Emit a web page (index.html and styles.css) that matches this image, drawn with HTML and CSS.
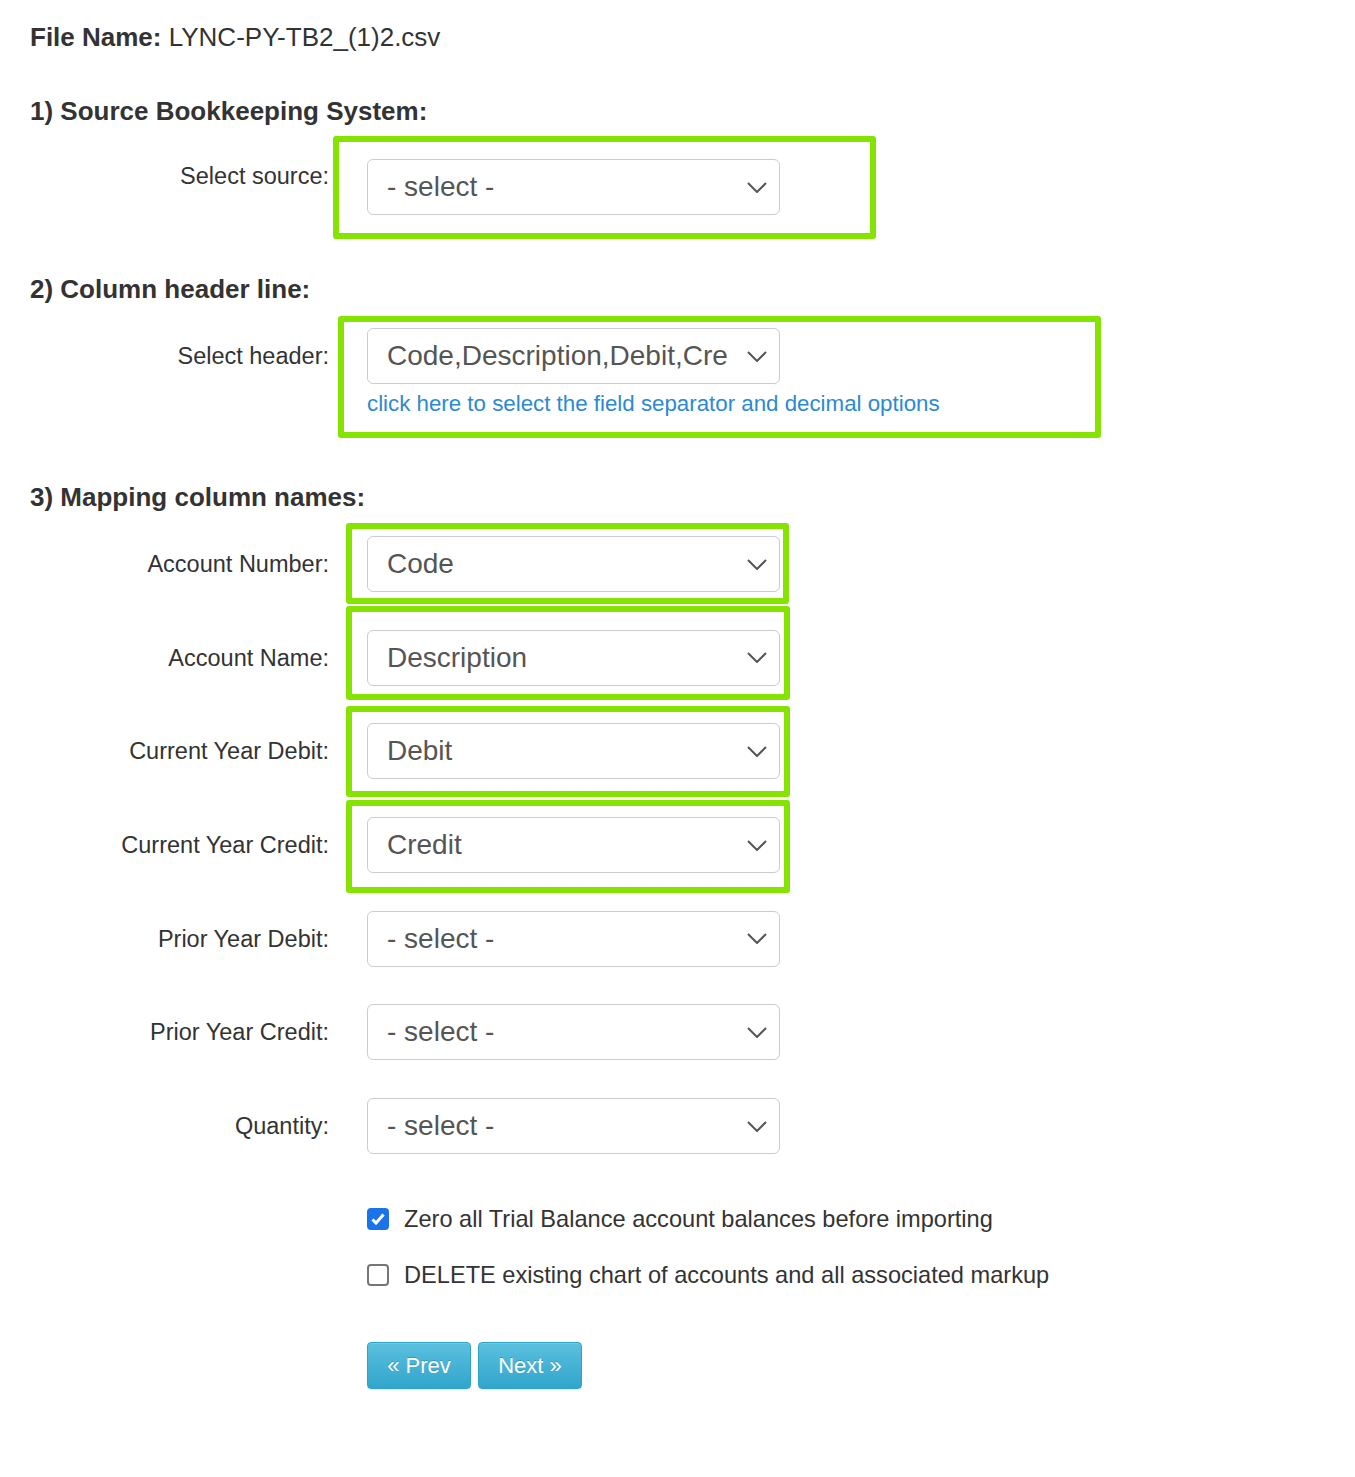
FILE: index.html
```html
<!DOCTYPE html>
<html lang="en">
<head>
  <meta charset="UTF-8" />
  <title>Import Trial Balance</title>
  <link rel="stylesheet" href="styles.css">
</head>
<body>
  <div id="wizard">
    <div class="file-name"><b>File Name:</b> LYNC-PY-TB2_(1)2.csv</div>

    <h2 class="step step-1">1) Source Bookkeeping System:</h2>
    <div class="row row-source">
      <label class="label label-top">Select source:</label>
      <div class="select"><span>- select -</span><svg class="chev" viewBox="0 0 20 11"><path d="M1 1l9 9 9-9"/></svg></div>
    </div>

    <h2 class="step step-2">2) Column header line:</h2>
    <div class="row row-header">
      <label class="label">Select header:</label>
      <div class="field">
        <div class="select"><span class="clip">Code,Description,Debit,Cre</span><svg class="chev" viewBox="0 0 20 11"><path d="M1 1l9 9 9-9"/></svg></div>
        <a href="#" class="options-link">click here to select the field separator and decimal options</a>
      </div>
    </div>

    <h2 class="step step-3">3) Mapping column names:</h2>
    <div class="mapping">
      <div class="row">
        <label class="label">Account Number:</label>
        <div class="select"><span>Code</span><svg class="chev" viewBox="0 0 20 11"><path d="M1 1l9 9 9-9"/></svg></div>
      </div>
      <div class="row">
        <label class="label">Account Name:</label>
        <div class="select"><span>Description</span><svg class="chev" viewBox="0 0 20 11"><path d="M1 1l9 9 9-9"/></svg></div>
      </div>
      <div class="row">
        <label class="label">Current Year Debit:</label>
        <div class="select"><span>Debit</span><svg class="chev" viewBox="0 0 20 11"><path d="M1 1l9 9 9-9"/></svg></div>
      </div>
      <div class="row">
        <label class="label">Current Year Credit:</label>
        <div class="select"><span>Credit</span><svg class="chev" viewBox="0 0 20 11"><path d="M1 1l9 9 9-9"/></svg></div>
      </div>
      <div class="row">
        <label class="label">Prior Year Debit:</label>
        <div class="select"><span>- select -</span><svg class="chev" viewBox="0 0 20 11"><path d="M1 1l9 9 9-9"/></svg></div>
      </div>
      <div class="row">
        <label class="label">Prior Year Credit:</label>
        <div class="select"><span>- select -</span><svg class="chev" viewBox="0 0 20 11"><path d="M1 1l9 9 9-9"/></svg></div>
      </div>
      <div class="row">
        <label class="label">Quantity:</label>
        <div class="select"><span>- select -</span><svg class="chev" viewBox="0 0 20 11"><path d="M1 1l9 9 9-9"/></svg></div>
      </div>
    </div>

    <div class="options">
      <label class="check">
        <span class="box checked"><svg viewBox="0 0 18 18"><path d="M3.5 9.5l3.5 3.5 7.5-8.5"/></svg></span>
        Zero all Trial Balance account balances before importing
      </label>
      <label class="check">
        <span class="box"></span>
        DELETE existing chart of accounts and all associated markup
      </label>
    </div>

    <div class="buttons">
      <button class="btn">&laquo; Prev</button>
      <button class="btn">Next &raquo;</button>
    </div>

    <!-- highlight annotations -->
    <div class="mark mark-source"></div>
    <div class="mark mark-header"></div>
    <div class="mark mark-code"></div>
    <div class="mark mark-desc"></div>
    <div class="mark mark-debit"></div>
    <div class="mark mark-credit"></div>
  </div>
</body>
</html>
```

FILE: styles.css
```css
body {
  margin: 0;
  background: #fff;
  color: #333;
  font-family: "Liberation Sans", Arial, sans-serif;
}
#wizard {
  position: relative;
  padding: 22px 30px 80px;
  min-height: 1300px;
}
.file-name {
  font-size: 26px;
  line-height: 30px;
}
.step {
  font-size: 26px;
  font-weight: bold;
  line-height: 28px;
  margin: 0;
}
.step-1 {
  margin-top: 45px;
}
.step-2 {
  margin-top: 60px;
}
.step-3 {
  margin-top: 66px;
}
.row {
  display: flex;
  align-items: flex-start;
  gap: 38px;
}
.label {
  width: 299px;
  flex: none;
  text-align: right;
  font-size: 23.5px;
  line-height: 28px;
  padding-top: 14px;
}
.label-top {
  padding-top: 3px;
}
.row-source {
  margin-top: 34px;
}
.row-header {
  margin-top: 25px;
}
.select {
  width: 413px;
  height: 56px;
  box-sizing: border-box;
  border: 1px solid #ccc;
  border-radius: 6px;
  display: flex;
  align-items: center;
  padding: 0 12px 0 19px;
  font-size: 28px;
  color: #555;
  background: #fff;
}
.select span {
  flex: 1;
  white-space: nowrap;
  overflow: hidden;
}
.chev {
  width: 20px;
  height: 11px;
  flex: none;
  fill: none;
  stroke: #555;
  stroke-width: 2;
}
.options-link {
  display: block;
  margin-top: 7px;
  font-size: 22.3px;
  line-height: 26px;
  color: #2b8ad3;
  text-decoration: none;
}
.mapping {
  margin-top: 25px;
  display: flex;
  flex-direction: column;
  gap: 37.7px;
}
.options {
  margin: 51px 0 0 337px;
  display: flex;
  flex-direction: column;
  gap: 28px;
}
.check {
  display: flex;
  align-items: center;
  gap: 15px;
  font-size: 23.6px;
  line-height: 28px;
}
.box {
  width: 22px;
  height: 22px;
  box-sizing: border-box;
  border: 2px solid #767676;
  border-radius: 4px;
  flex: none;
}
.box.checked {
  background: #1a73e8;
  border-color: #1a73e8;
}
.box svg {
  display: block;
  width: 18px;
  height: 18px;
  fill: none;
  stroke: #fff;
  stroke-width: 3;
}
.buttons {
  margin: 53px 0 0 337px;
  display: flex;
  gap: 7px;
}
.btn {
  width: 104px;
  height: 47px;
  border: 1px solid #2aa4c9;
  border-radius: 4px;
  background: linear-gradient(to bottom, #5bc0de, #31a5cc);
  color: #fff;
  font-family: "Liberation Sans", Arial, sans-serif;
  font-size: 22px;
  text-shadow: 0 -1px 0 rgba(0, 0, 0, 0.2);
  box-shadow: inset 0 1px 0 rgba(255, 255, 255, 0.15), 0 1px 1px rgba(0, 0, 0, 0.08);
  cursor: pointer;
}
.mark {
  position: absolute;
  border: 6px solid #84e400;
  border-radius: 3px;
  box-sizing: border-box;
}
.mark-source { left: 333px; top: 136px; width: 543px; height: 103px; }
.mark-header { left: 338px; top: 316px; width: 763px; height: 122px; }
.mark-code { left: 346px; top: 523px; width: 443px; height: 81px; }
.mark-desc { left: 346px; top: 606px; width: 444px; height: 94px; }
.mark-debit { left: 346px; top: 706px; width: 444px; height: 91px; }
.mark-credit { left: 346px; top: 800px; width: 444px; height: 93px; }
```
